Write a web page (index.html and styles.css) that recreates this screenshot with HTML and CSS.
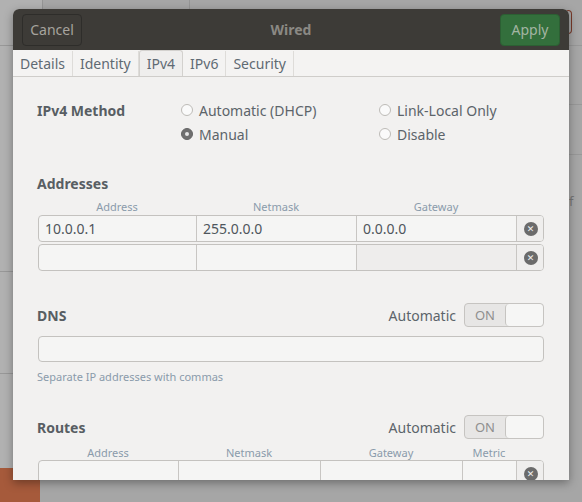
FILE: index.html
```html
<!DOCTYPE html>
<html>
<head>
<meta charset="utf-8">
<link rel="stylesheet" href="styles.css">
</head>
<body>
<div class="desktop">
  <div class="bg-col-left"></div>
  <div class="bg-line bl1"></div>
  <div class="bg-line bl2"></div>
  <div class="bg-hline h1"></div>
  <div class="bg-hline h2"></div>
  <div class="bg-hline h3"></div>
  <div class="bg-hline h4"></div>
  <div class="bg-hline h5"></div>
  <div class="bg-hline h6"></div>
  <div class="bg-f">f</div>
  <div class="bg-orange"></div>
  <div class="bg-bracket"></div>

  <div class="dialog">
    <div class="headerbar">
      <button class="hb-btn cancel">Cancel</button>
      <div class="title">Wired</div>
      <button class="hb-btn apply">Apply</button>
    </div>
    <div class="tabs">
      <div class="tab">Details</div>
      <div class="tab">Identity</div>
      <div class="tab active">IPv4</div>
      <div class="tab">IPv6</div>
      <div class="tab">Security</div>
    </div>
    <div class="content">
      <div class="method">
        <div class="label method-label">IPv4 Method</div>
        <div class="radio"><span class="rb"></span>Automatic (DHCP)</div>
        <div class="radio"><span class="rb"></span>Link-Local Only</div>
        <div></div>
        <div class="radio"><span class="rb checked"></span>Manual</div>
        <div class="radio"><span class="rb"></span>Disable</div>
      </div>

      <div class="label section-title addr-title">Addresses</div>
      <div class="colheads three">
        <div>Address</div><div>Netmask</div><div>Gateway</div><div class="spacer"></div>
      </div>
      <div class="entryrow three">
        <div class="cell">10.0.0.1</div>
        <div class="cell">255.0.0.0</div>
        <div class="cell">0.0.0.0</div>
        <div class="cell del"><span class="xicon">✕</span></div>
      </div>
      <div class="entryrow three second">
        <div class="cell"></div>
        <div class="cell"></div>
        <div class="cell dim"></div>
        <div class="cell del dim"><span class="xicon">✕</span></div>
      </div>

      <div class="sect-row dns-row">
        <div class="label">DNS</div>
        <div class="auto">
          <span>Automatic</span>
          <div class="switch"><span class="on">ON</span><span class="knob"></span></div>
        </div>
      </div>
      <div class="dns-entry"></div>
      <div class="hint">Separate IP addresses with commas</div>

      <div class="sect-row routes-row">
        <div class="label">Routes</div>
        <div class="auto">
          <span>Automatic</span>
          <div class="switch"><span class="on">ON</span><span class="knob"></span></div>
        </div>
      </div>
      <div class="colheads four">
        <div>Address</div><div>Netmask</div><div>Gateway</div><div>Metric</div><div class="spacer"></div>
      </div>
      <div class="entryrow four">
        <div class="cell"></div>
        <div class="cell"></div>
        <div class="cell"></div>
        <div class="cell"></div>
        <div class="cell del"><span class="xicon">✕</span></div>
      </div>
    </div>
  </div>
</div>
</body>
</html>
```
FILE: styles.css
```css
* { box-sizing: border-box; }
html, body { margin: 0; padding: 0; }
body {
  width: 582px; height: 502px; overflow: hidden;
  font-family: "Noto Sans", "DejaVu Sans", sans-serif;
  font-size: 14px;
}
.desktop {
  position: relative; width: 582px; height: 502px;
  background: #a6a6a6;
}
.bg-col-left { position: absolute; left: 0; top: 0; width: 42px; height: 468px; background: #b1b1b1; }
.bg-line { position: absolute; top: 0; width: 1px; height: 10px; background: #959595; }
.bl1 { left: 42px; }
.bl2 { left: 189px; }
.bg-hline { position: absolute; height: 1px; background: #989898; }
.h1 { left: 0; width: 14px; top: 45px; }
.h2 { left: 0; width: 14px; top: 271px; }
.h3 { left: 0; width: 14px; top: 373px; }
.h4 { left: 568px; width: 14px; top: 45px; }
.h5 { left: 568px; width: 14px; top: 104px; }
.h6 { left: 568px; width: 14px; top: 154px; }
.bg-f { position: absolute; left: 569px; top: 192px; font-size: 13px; color: #777; }
.bg-orange { position: absolute; left: 0; top: 468px; width: 40px; height: 34px; background: #a65a3b; }
.bg-bracket { position: absolute; left: 566px; top: 10px; width: 6px; height: 24px; border: 1px solid #7a3a2a; border-left: none; border-radius: 0 4px 4px 0; }

.dialog {
  position: absolute; left: 13px; top: 9px; width: 556px; height: 471px;
  background: #f2f1f0; overflow: hidden;
  border-radius: 6px 6px 0 0;
  box-shadow: 0 3px 10px rgba(0,0,0,0.35);
  display: flex; flex-direction: column;
}
.headerbar {
  height: 41px; flex: none;
  background: #3d3b37;
  display: flex; align-items: center; justify-content: space-between;
  padding: 0 9px;
}
.hb-btn {
  font-family: inherit; font-size: 14px;
  height: 32px; border-radius: 4px; padding: 0 8px;
  display: flex; align-items: center;
}
.cancel { width: 60px; background: #3d3b37; border: 1px solid #2e2d2a; color: #a7a49e; justify-content: center; }
.apply { width: 60px; background: #336f3c; border: 1px solid #2c5f33; color: #a3b5a3; justify-content: center; }
.title { font-weight: bold; color: #8b8984; font-size: 14px; }

.tabs {
  height: 27px; flex: none; display: flex;
  background: #f4f3f2;
  border-bottom: 1px solid #cfcdca;
}
.tab {
  padding: 0 7px; display: flex; align-items: center;
  color: #5f6a73; border-right: 1px solid #dedcd9;
  margin-top: 1px;
}
.tab.active {
  background: #efeeed; border: 1px solid #d3d1ce; border-bottom: none;
  border-radius: 3px 3px 0 0; margin-top: 0;
}

.content { padding: 0 24px 0 24px; flex: 1; }
.label { font-weight: bold; color: #585e63; }
.method {
  display: grid; grid-template-columns: 144px 198px 1fr;
  grid-auto-rows: 24px; margin-top: 21px;
}
.method > div { display: flex; align-items: center; }
.radio { color: #5c646a; }
.rb {
  width: 12px; height: 12px; border-radius: 50%;
  border: 1px solid #bdbbb7; background: #fafafa; margin-right: 6px; flex: none;
  position: relative;
}
.rb.checked { background: #6f6f6f; border-color: #666; }
.rb.checked::after {
  content: ""; position: absolute; left: 3px; top: 3px; width: 4px; height: 4px;
  border-radius: 50%; background: #e6e6e6;
}
.section-title { height: 24px; display: flex; align-items: center; }
.addr-title { margin-top: 25px; }

.colheads { display: flex; font-size: 11px; color: #8a9bab; height: 14px; align-items: center; margin-left: 1px; }
.colheads > div { text-align: center; }
.colheads.three { margin-top: 4px; }
.colheads.three > div:nth-child(1) { width: 158px; }
.colheads.three > div:nth-child(2), .colheads.three > div:nth-child(3) { width: 160px; }
.colheads.three > .spacer { width: 28px; }
.colheads.four > div:nth-child(1) { width: 140px; }
.colheads.four > div:nth-child(2), .colheads.four > div:nth-child(3) { width: 142px; }
.colheads.four > div:nth-child(4) { width: 54px; }
.colheads.four > .spacer { width: 28px; }

.entryrow {
  display: flex; height: 27px; margin-left: 1px; margin-right: 1px;
  border: 1px solid #c4c2bf; border-radius: 4px; overflow: hidden;
  background: #f5f5f4;
}
.entryrow.three { margin-top: 2px; }
.entryrow.second { margin-top: 2px; }
.cell {
  border-left: 1px solid #c8c6c3; display: flex; align-items: center;
  padding-left: 6px; color: #4f565c; flex: none;
}
.cell:first-child { border-left: none; padding-left: 6px; }
.three .cell { width: 160px; }
.three .cell:first-child { width: 157px; }
.three .cell.del { width: 28px; }
.four .cell { width: 142px; }
.four .cell:first-child { width: 139px; }
.four .cell:nth-child(4) { width: 54px; }
.four .cell.del { width: 28px; }
.cell.dim { background: #eeedec; }
.cell.del { background: #efeeed; justify-content: center; padding-left: 0; }
.xicon {
  width: 14px; height: 14px; border-radius: 50%; background: #6b6b6b;
  color: #f0f0f0; font-size: 9px; font-weight: bold;
  display: flex; align-items: center; justify-content: center; line-height: 1;
}

.sect-row { display: flex; align-items: center; justify-content: space-between; height: 24px; }
.dns-row { margin-top: 32px; }
.auto { display: flex; align-items: center; color: #5c646a; }
.auto > span { margin-right: 8px; }
.switch {
  width: 80px; height: 24px; border: 1px solid #c6c4c1; border-radius: 4px;
  background: #e7e6e5; display: flex; align-items: stretch; overflow: hidden;
  margin-right: 1px;
}
.switch .on { width: 40px; display: flex; align-items: center; justify-content: center; color: #8f8f8f; font-size: 13px; }
.switch .knob { flex: 1; background: #f6f6f5; border-left: 1px solid #c6c4c1; border-radius: 4px; }

.dns-entry {
  margin-top: 9px; margin-left: 1px; margin-right: 1px; height: 26px;
  border: 1px solid #c4c2bf; border-radius: 4px; background: #f5f5f4;
}
.hint { font-size: 11px; color: #8a9bab; margin-top: 7px; height: 14px; display: flex; align-items: center; }
.routes-row { margin-top: 32px; }
.colheads.four { margin-top: 6px; }
.entryrow.four { margin-top: 1px; }
```
